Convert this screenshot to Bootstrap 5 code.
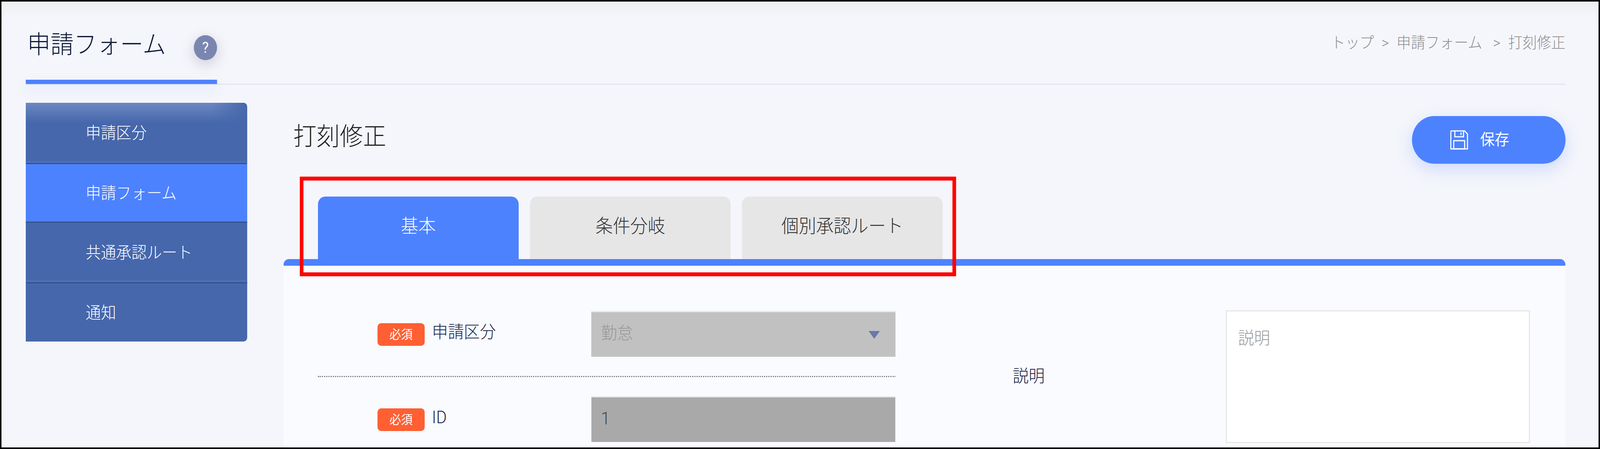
<!DOCTYPE html>
<html lang="ja">
<head>
<meta charset="utf-8">
<title>申請フォーム</title>
<link rel="stylesheet" href="https://cdn.jsdelivr.net/npm/bootstrap@5.3.0/dist/css/bootstrap.min.css">
<style>
html,body{margin:0;height:100%;overflow:hidden}
body{font-family:Roboto,"Noto Sans CJK JP","Noto Sans",sans-serif;font-weight:300;background:#f5f6fb;color:#1a2547}
.stage{width:100vw;height:100vh;overflow:hidden;contain:paint}
.sheet{position:relative;width:4408px;height:1149px;border:4px solid #000;padding:0 91px 0 67px;background:linear-gradient(#eeeff2,#f5f6fb 44px);overflow:hidden;transform:scaleX(.92922);transform-origin:0 0}
.top-head{height:213px;border-bottom:3px solid #e3e7f2;flex:none}
.title-block{width:527px;height:211px}
.title-row{padding:79px 0 0 4px;height:200px}
.page-title{font-size:64px;line-height:64px;font-weight:300;margin:0;color:#0f1a3a}
.help-dot{width:64px;height:64px;margin-top:7px;background:#7b86b0;color:#fff;font-size:38px;line-height:1;box-shadow:0 10px 34px rgba(90,95,130,.28);font-weight:400}
.title-line{height:11px;background:#4d82ff;box-shadow:0 14px 34px rgba(77,130,255,.16)}
.crumbs{margin-top:81px;--bs-breadcrumb-margin-bottom:0;--bs-breadcrumb-divider:'>';--bs-breadcrumb-item-padding-x:21px;--bs-breadcrumb-divider-color:#909090;--bs-breadcrumb-item-active-color:#909090;font-size:39.5px;line-height:50px;color:#909090;flex-wrap:nowrap}
.crumbs .breadcrumb-item:last-child{padding-left:30px}
.side-col{width:610px;flex:none;margin-top:46px}
.side-list{--bs-list-group-border-width:0;--bs-list-group-border-radius:0 10px 10px 0;--bs-list-group-bg:#4667ac;--bs-list-group-color:#fff}
.side-list .list-group-item{height:155px;padding:2px 0 0 165px;font-size:42px;line-height:1;display:flex;align-items:center;background:#4667ac;color:#fff;border-bottom:3px solid #33518f;box-shadow:inset 0 -5px 0 #4e70b5}
.side-list .list-group-item:first-child{height:157px;background:linear-gradient(to left,#4667ac,rgba(70,103,172,0) 16%),linear-gradient(#6c88c1,#4667ac 52px)}
.side-list .list-group-item:last-child{border-bottom:0;box-shadow:none;height:149px}
.side-list .list-group-item.active{height:150px;background:#4d82ff;box-shadow:none;margin:0}
.main-col{margin-left:100px;min-width:0}
.head-row{padding:80px 0 84px 27px;flex:none}
.form-heading{font-size:64px;line-height:64px;font-weight:300;margin:0 0 16px;color:#222}
.save-btn{--bs-btn-bg:#4d82ff;--bs-btn-color:#fff;--bs-btn-border-width:0;--bs-btn-hover-bg:#4d82ff;--bs-btn-hover-color:#fff;width:423px;height:122px;border-radius:61px;font-size:40px;font-weight:400;gap:33px;padding:0 50px 0 0;box-shadow:0 14px 44px rgba(77,130,255,.24)}
.tab-strip{padding-left:95px;gap:31px;border:0;--bs-nav-tabs-border-width:0;flex:none;flex-wrap:nowrap}
.tab-strip .nav-link{width:553px;height:160px;margin:0;border:0;border-radius:20px 20px 0 0;background:#e6e6e6;color:#333;font-size:48px;line-height:1;font-weight:300;display:flex;align-items:center;justify-content:center;padding:0 0 8px}
.tab-strip .nav-link.active{background:#4d82ff;color:#fff}
.form-panel{background:#fafbfe;border-top:17px solid #4d82ff;border-radius:15px 15px 0 0;padding:116px 98px 0 95px}
.left-form{width:1591px;flex:none}
.form-line{padding-left:164px;height:117px}
.line-sep{height:0;border-top:3px dotted #777;margin:49px 0 49px}
.req-tag{width:130px;height:58px;border-radius:10px;background:#ff5f33;color:#fff;font-size:32px;font-weight:400;line-height:1;flex:none;margin-right:20px;margin-top:2px}
.field-name{font-size:44px;line-height:1;color:#1a2547;font-weight:300;margin-bottom:10px}
.label-area{width:587px;flex:none}
.label-area .field-name{display:block;margin:0 0 2px}
.ctrl-box{width:838px;margin-left:auto;flex:none}
.form-select.grey-select,.form-control.grey-input{height:117px;border:0;border-top:3px solid #e6e6e6;border-radius:0;padding:0 27px 6px;font-size:44px;background-image:none;font-weight:300}
.form-select.grey-select:disabled{background-color:#c1c1c1;color:#999;opacity:1}
.form-control.grey-input:disabled{background-color:#a9a9a9;color:#444;opacity:1}
.drop-arrow{position:absolute;right:43px;top:51px}
.text-box{width:838px;height:340px;border:3px solid #e6e6e6;border-radius:0;padding:43px 31px;font-size:44px;background:#fff;resize:none;font-weight:300;line-height:1.2}
.text-box::placeholder{color:#999;opacity:1}
.desc-area{margin-left:323px;margin-top:-2px}
.red-mark{position:absolute;left:822px;top:448px;width:1808px;height:255px;border:10px solid #f00;pointer-events:none}
</style>
</head>
<body>
<div class="stage">
<div class="sheet d-flex flex-column">
  <header class="top-head d-flex justify-content-between">
    <div class="title-block d-flex flex-column">
      <div class="title-row d-flex justify-content-between align-items-start">
        <h1 class="page-title">申請フォーム</h1>
        <span class="help-dot rounded-circle d-flex align-items-center justify-content-center">?</span>
      </div>
      <div class="title-line"></div>
    </div>
    <nav aria-label="breadcrumb">
      <ol class="breadcrumb crumbs">
        <li class="breadcrumb-item">トップ</li>
        <li class="breadcrumb-item">申請フォーム</li>
        <li class="breadcrumb-item active" aria-current="page">打刻修正</li>
      </ol>
    </nav>
  </header>
  <div class="d-flex flex-grow-1">
    <aside class="side-col">
      <ul class="list-group side-list">
        <li class="list-group-item">申請区分</li>
        <li class="list-group-item active">申請フォーム</li>
        <li class="list-group-item">共通承認ルート</li>
        <li class="list-group-item">通知</li>
      </ul>
    </aside>
    <main class="main-col flex-grow-1 d-flex flex-column">
      <div class="head-row d-flex justify-content-between align-items-center">
        <h2 class="form-heading">打刻修正</h2>
        <button type="button" class="btn save-btn d-flex align-items-center justify-content-center">
          <svg width="50" height="50" viewBox="0 0 50 50" fill="none" stroke="#fff" stroke-width="3" aria-hidden="true"><path d="M4 2h36l8 8v38H2V4a2 2 0 0 1 2-2z"/><path d="M13 2v15h24V2M30 6v7"/><rect x="10" y="27" width="30" height="21"/></svg>
          <span>保存</span>
        </button>
      </div>
      <ul class="nav nav-tabs tab-strip">
        <li class="nav-item"><a class="nav-link active" href="#">基本</a></li>
        <li class="nav-item"><a class="nav-link" href="#">条件分岐</a></li>
        <li class="nav-item"><a class="nav-link" href="#">個別承認ルート</a></li>
      </ul>
      <section class="form-panel flex-grow-1 d-flex">
        <div class="left-form">
          <div class="form-line d-flex align-items-center">
            <span class="req-tag d-flex align-items-center justify-content-center">必須</span>
            <span class="field-name">申請区分</span>
            <div class="ctrl-box position-relative">
              <select class="form-select grey-select" disabled><option>勤怠</option></select>
              <svg class="drop-arrow" width="31" height="20" viewBox="0 0 31 20" aria-hidden="true"><path d="M0 0h31L15.500 20z" fill="#6a77ab"/></svg>
            </div>
          </div>
          <div class="line-sep"></div>
          <div class="form-line d-flex align-items-center">
            <span class="req-tag d-flex align-items-center justify-content-center">必須</span>
            <span class="field-name">ID</span>
            <div class="ctrl-box">
              <input class="form-control grey-input" type="text" value="1" disabled>
            </div>
          </div>
        </div>
        <div class="desc-area d-flex align-items-center align-self-start">
          <div class="label-area"><span class="field-name">説明</span></div>
          <textarea class="form-control text-box" placeholder="説明"></textarea>
        </div>
      </section>
    </main>
  </div>
  <div class="red-mark"></div>
</div>
</div>
<script src="https://cdn.jsdelivr.net/npm/bootstrap@5.3.0/dist/js/bootstrap.bundle.min.js"></script>
</body>
</html>
